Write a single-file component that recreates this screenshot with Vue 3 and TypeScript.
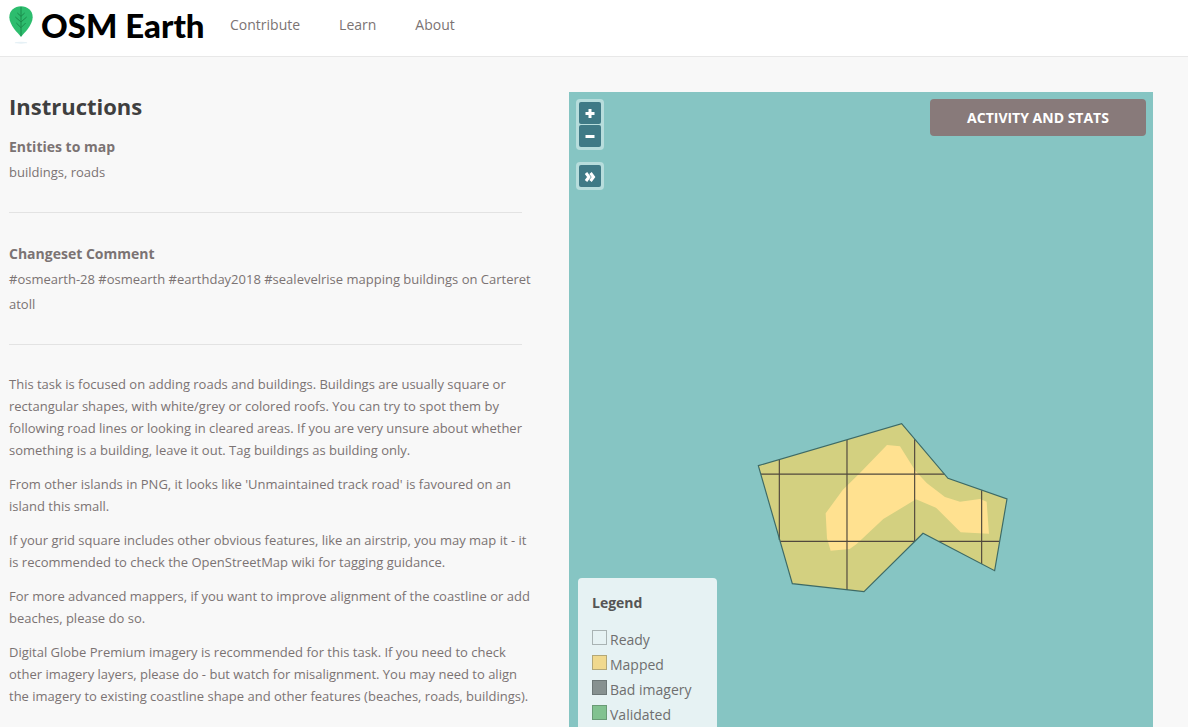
<script setup lang="ts">
interface LegendItem {
  label: string
  kind: string
}

const navLinks: string[] = ['Contribute', 'Learn', 'About']

const notes: string[] = [
  'This task is focused on adding roads and buildings. Buildings are usually square or rectangular shapes, with white/grey or colored roofs. You can try to spot them by following road lines or looking in cleared areas. If you are very unsure about whether something is a building, leave it out. Tag buildings as building only.',
  "From other islands in PNG, it looks like 'Unmaintained track road' is favoured on an island this small.",
  'If your grid square includes other obvious features, like an airstrip, you may map it - it is recommended to check the OpenStreetMap wiki for tagging guidance.',
  'For more advanced mappers, if you want to improve alignment of the coastline or add beaches, please do so.',
  'Digital Globe Premium imagery is recommended for this task. If you need to check other imagery layers, please do - but watch for misalignment. You may need to align the imagery to existing coastline shape and other features (beaches, roads, buildings).',
]

const legend: LegendItem[] = [
  { label: 'Ready', kind: 'ready' },
  { label: 'Mapped', kind: 'mapped' },
  { label: 'Bad imagery', kind: 'bad' },
  { label: 'Validated', kind: 'validated' },
]
</script>

<template>
  <div class="page">
    <header class="topbar">
      <a class="brand" href="#">
        <svg class="leaf" viewBox="0 0 72 117" aria-hidden="true">
          <ellipse cx="36" cy="110" rx="19" ry="3" fill="#e6f1f6" />
          <path d="M36 92C27 83 1 57 1 34 1 13 17 1 36 1s35 12 35 33C71 57 45 83 36 92z" fill="#2dbd6e" />
          <g fill="none" stroke="#1b8a4b" stroke-width="3">
            <path d="M36 3v88M36 31 25 21M36 31 47 21M36 48 19 33M36 48 53 33M36 65 22 51M36 65 50 51" />
          </g>
        </svg>
        <span class="brand-name">OSM Earth</span>
      </a>
      <nav class="nav">
        <a v-for="link in navLinks" :key="link" href="#">{{ link }}</a>
      </nav>
    </header>

    <main class="content">
      <section class="instructions">
        <h1>Instructions</h1>
        <div class="block">
          <h2>Entities to map</h2>
          <p>buildings, roads</p>
        </div>
        <div class="block">
          <h2>Changeset Comment</h2>
          <p>#osmearth-28 #osmearth #earthday2018 #sealevelrise mapping buildings on Carteret atoll</p>
        </div>
        <div class="notes">
          <p v-for="note in notes" :key="note">{{ note }}</p>
        </div>
      </section>

      <section class="map" aria-label="Task map">
        <svg class="map-canvas" viewBox="0 0 584 635" preserveAspectRatio="xMidYMin meet" aria-hidden="true">
          <g transform="translate(171 318) scale(0.3333)">
            <path
              d="M55 167 485 41 624 205 801 267 764 482 549 370 372 545 157 521z"
              fill="#d3d080"
            />
            <path
              d="M441 105 480 109 527 184 561 220 615 261 660 275 720 267 740 275 747 371 662 367 588 293 528 268 430 327 350 402 329 417 272 422 261 385 257 310 308 240 362 187z"
              fill="#ffe190"
            />
            <path
              d="M118 149V390M321 90V540M524 88V393M725 241V462M63 192.500H613M120 394H524M596 394H778"
              fill="none"
              stroke="#51483d"
              stroke-width="3.500"
            />
            <path
              d="M55 167 485 41 624 205 801 267 764 482 549 370 372 545 157 521z"
              fill="none"
              stroke="#3d6a66"
              stroke-width="3.500"
            />
          </g>
        </svg>

        <div class="controls">
          <div class="control-group">
            <button type="button" aria-label="Zoom in">
              <svg viewBox="0 0 22 22"><path d="M11 7v9M6.500 11.500h9" /></svg>
            </button>
            <button type="button" aria-label="Zoom out">
              <svg viewBox="0 0 22 22"><path d="M6.500 11.500h9" /></svg>
            </button>
          </div>
          <div class="control-group">
            <button type="button" aria-label="Expand overview">
              <svg viewBox="0 0 22 22"><path class="chevron" d="M7 8 10 12 7 16M11.500 8 14.500 12 11.500 16" /></svg>
            </button>
          </div>
        </div>

        <button class="stats" type="button">ACTIVITY AND STATS</button>

        <div class="legend">
          <h3>Legend</h3>
          <ul>
            <li v-for="item in legend" :key="item.kind">
              <span class="swatch" :class="item.kind"></span>{{ item.label }}
            </li>
          </ul>
        </div>
      </section>
    </main>
  </div>
</template>

<style>
body {
  margin: 0;
  background: #f8f8f8;
}
</style>

<style scoped>
.page {
  box-sizing: border-box;
  display: flex;
  flex-direction: column;
  height: 100vh;
  overflow: hidden;
  font-family: "Open Sans", "Noto Sans", sans-serif;
  color: #7b7373;
  background: #f8f8f8;
}

.topbar {
  display: flex;
  flex: none;
  align-items: center;
  box-sizing: border-box;
  height: 57px;
  padding: 0 9px 6px;
  background: #fff;
  border-bottom: 1px solid #e8e8e8;
}

.brand {
  display: flex;
  align-items: center;
  gap: 8px;
  width: 221px;
  box-sizing: border-box;
  color: #000;
  text-decoration: none;
}

.leaf {
  flex: none;
  width: 24px;
  height: 39px;
}

.brand-name {
  font-family: Lato, "Open Sans", sans-serif;
  font-size: 33px;
  font-weight: 900;
  line-height: 40px;
  white-space: nowrap;
}

.nav {
  display: flex;
  gap: 39px;
}

.nav a {
  color: #7b7373;
  font-size: 14px;
  line-height: 20px;
  text-decoration: none;
}

.content {
  display: grid;
  flex: 1;
  grid-template-rows: minmax(0, 1fr);
  grid-template-columns: minmax(0, 513fr) minmax(0, 584fr);
  gap: 47px;
  min-height: 0;
  padding: 35px 35px 0 9px;
}

h1,
h2,
h3,
p,
ul {
  margin: 0;
}

h1 {
  color: #3f3f3f;
  font-size: 22px;
  line-height: 28px;
}

h2 {
  font-size: 14px;
  line-height: 26px;
}

.instructions h1 {
  margin-bottom: 14px;
}

/* Copy runs slightly past the divider rules, into the column gap. */
.instructions p {
  margin-right: -11px;
}

.block {
  padding-bottom: 27px;
  margin-bottom: 28px;
  border-bottom: 1px solid #e3e3e3;
}

.block p {
  font-size: 13px;
  line-height: 25px;
}

.notes {
  font-size: 13px;
  line-height: 22px;
}

.notes p + p {
  margin-top: 12px;
}

.map {
  position: relative;
  overflow: hidden;
  background: #86c5c3;
}

.map-canvas {
  display: block;
  width: 100%;
  height: 100%;
}

.controls {
  position: absolute;
  top: 7px;
  left: 7px;
  display: flex;
  flex-direction: column;
  gap: 12px;
}

.control-group {
  display: flex;
  flex-direction: column;
  gap: 1px;
  padding: 3px;
  background: #b7dddc;
  border-radius: 4px;
}

.control-group button {
  width: 22px;
  height: 22px;
  padding: 0;
  background: #3f7a86;
  border: 0;
  border-radius: 2px;
}

.control-group svg {
  display: block;
  width: 22px;
  height: 22px;
  fill: none;
  stroke: #fff;
  stroke-width: 3;
}

.stats {
  position: absolute;
  top: 7px;
  right: 7px;
  width: 216px;
  height: 37px;
  padding: 0;
  color: #fff;
  font-family: inherit;
  font-size: 14px;
  font-weight: 700;
  background: #887a7a;
  border: 0;
  border-radius: 4px;
}

.legend {
  position: absolute;
  bottom: 0;
  left: 9px;
  box-sizing: border-box;
  width: 139px;
  padding: 12px 14px 0;
  color: #6f6f6f;
  background: #e6f2f3;
  border-radius: 4px 4px 0 0;
}

.legend h3 {
  margin-bottom: 12px;
  color: #555;
  font-size: 14px;
  line-height: 25px;
}

.legend ul {
  padding: 0;
  list-style: none;
}

.legend li {
  display: flex;
  gap: 3px;
  font-size: 14px;
  line-height: 25px;
  white-space: nowrap;
}

.swatch {
  box-sizing: border-box;
  flex: none;
  width: 15px;
  height: 15px;
  margin-top: 3px;
  border: 1px solid #a9b3b3;
}

.mapped {
  background: #f0d98e;
  border-color: #b3a878;
}

.bad {
  background: #879190;
  border-color: #6d7777;
}

.validated {
  background: #82c290;
  border-color: #6a9b76;
}
</style>
